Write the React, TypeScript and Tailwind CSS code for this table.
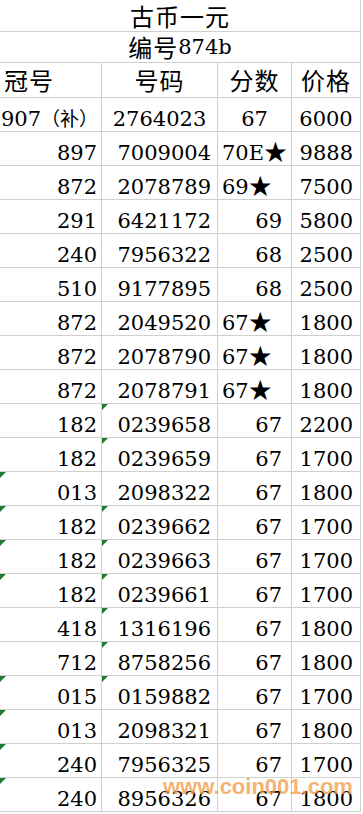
import React from 'react';

interface Row {
  prefix: string;
  serial: string;
  score: string;
  price: string;
  tri1?: boolean;
  tri2?: boolean;
}

const rows: Row[] = [
  { prefix: '897', serial: '7009004', score: '70E★', price: '9888' },
  { prefix: '872', serial: '2078789', score: '69★', price: '7500' },
  { prefix: '291', serial: '6421172', score: '69', price: '5800' },
  { prefix: '240', serial: '7956322', score: '68', price: '2500' },
  { prefix: '510', serial: '9177895', score: '68', price: '2500' },
  { prefix: '872', serial: '2049520', score: '67★', price: '1800' },
  { prefix: '872', serial: '2078790', score: '67★', price: '1800' },
  { prefix: '872', serial: '2078791', score: '67★', price: '1800' },
  { prefix: '182', serial: '0239658', score: '67', price: '2200', tri2: true },
  { prefix: '182', serial: '0239659', score: '67', price: '1700', tri2: true },
  { prefix: '013', serial: '2098322', score: '67', price: '1800', tri1: true },
  { prefix: '182', serial: '0239662', score: '67', price: '1700', tri1: true, tri2: true },
  { prefix: '182', serial: '0239663', score: '67', price: '1700', tri1: true, tri2: true },
  { prefix: '182', serial: '0239661', score: '67', price: '1700', tri1: true, tri2: true },
  { prefix: '418', serial: '1316196', score: '67', price: '1800', tri2: true },
  { prefix: '712', serial: '8758256', score: '67', price: '1800', tri2: true },
  { prefix: '015', serial: '0159882', score: '67', price: '1700', tri1: true, tri2: true },
  { prefix: '013', serial: '2098321', score: '67', price: '1800', tri1: true },
  { prefix: '240', serial: '7956325', score: '67', price: '1700', tri1: true },
  { prefix: '240', serial: '8956326', score: '67', price: '1800', tri1: true },
];

const serif = 'font-["DejaVu_Serif","Noto_Sans_CJK_SC",serif]';
const zh = 'font-["Noto_Sans_CJK_SC",sans-serif]';

function Tri() {
  // the little green "number stored as text" flag
  return (
    <span className="absolute left-0 top-0 h-0 w-0 border-t-[6px] border-r-[6px] border-t-[#1f7a36] border-r-transparent" />
  );
}

function Score({ value }: { value: string }) {
  if (value.endsWith('★')) {
    return (
      <div className="h-full pl-[4px] pt-[9px] leading-[24px] whitespace-nowrap">
        {value.slice(0, -1)}
        <span className={`${zh} text-[23px] leading-[18px]`}>★</span>
      </div>
    );
  }
  return <div className="h-full pr-[9px] pt-[9px] text-right leading-[24px]">{value}</div>;
}

const cell = 'relative h-[34px] border-b border-r border-[#d0d0d0]';
const head = `${cell} h-[35px] flex items-center ${zh} text-[24px] tracking-[1px]`;

export default function App() {
  return (
    <div className={`relative h-[814px] w-[363px] overflow-hidden bg-white text-[21px] text-black ${serif}`}>
      <div className="w-[361px]">
        <div className="flex h-[32px] items-center justify-center border-b border-r border-[#d0d0d0]">
          <span className={`${zh} text-[24px] tracking-[1px] leading-[30px]`}>古币一元</span>
        </div>
        <div className="flex h-[31px] items-end justify-center border-b border-r border-[#d0d0d0] pb-[2px]">
          <span className={`${zh} text-[24px] tracking-[1px] leading-[26px]`}>编号</span>
          <span className="leading-[26px]">874b</span>
        </div>

        <div className="grid grid-cols-[102px_116px_74px_69px]">
          {/* header */}
          <div className={`${head} pl-[4px]`}>冠号</div>
          <div className={`${head} justify-center`}>号码</div>
          <div className={`${head} justify-center`}>分数</div>
          <div className={`${head} justify-center`}>价格</div>

          {/* first row is typed in as text, centred */}
          <div className={`${cell} pl-[1px] pt-[9px] leading-[24px] whitespace-nowrap`}>
            907<span className={`${zh} text-[19px] leading-[18px]`}>（补）</span>
          </div>
          <div className={`${cell} pt-[9px] text-center leading-[24px]`}>2764023</div>
          <div className={`${cell} pt-[9px] text-center leading-[24px]`}>67</div>
          <div className={`${cell} pt-[9px] text-center leading-[24px]`}>6000</div>

          {rows.map((r, i) => (
            <React.Fragment key={i}>
              <div className={`${cell} pr-[4px] pt-[9px] text-right leading-[24px]`}>
                {r.tri1 && <Tri />}
                {r.prefix}
              </div>
              <div className={`${cell} pr-[6px] pt-[9px] text-right leading-[24px]`}>
                {r.tri2 && <Tri />}
                {r.serial}
              </div>
              <div className={cell}>
                <Score value={r.score} />
              </div>
              <div className={`${cell} pr-[7px] pt-[9px] text-right leading-[24px]`}>{r.price}</div>
            </React.Fragment>
          ))}
        </div>
      </div>

      {/* site watermark */}
      <div className='pointer-events-none absolute left-[163px] top-[776px] font-["Liberation_Sans",sans-serif] text-[22px] font-bold leading-none text-[#f29a45] opacity-75'>
        www.coin001.com
      </div>
    </div>
  );
}
